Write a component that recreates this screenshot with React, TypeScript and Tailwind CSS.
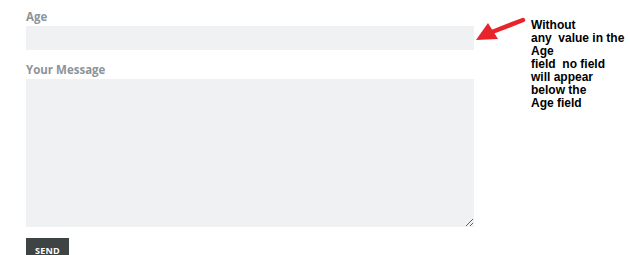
export default function App() {
  return (
    <div className="relative w-[630px] h-[255px] overflow-hidden bg-white">
      <form className="flex flex-col w-[448px] ml-[26px] pt-[9px]" style={{ fontFamily: '"Open Sans", sans-serif' }}>
        <label className="text-[11.5px] font-bold text-[#8c9499] leading-[16px]">Age</label>
        <input type="text" className="mt-[1px] h-[24px] bg-[#f0f1f2] outline-none" />
        <label className="mt-[12px] text-[11.5px] font-bold text-[#8c9499] leading-[16px]">Your Message</label>
        <textarea className="mt-[1px] h-[148px] bg-[#f0f1f2] outline-none resize-y" />
        <button
          type="button"
          className="mt-[11px] self-start w-[43px] h-[24px] bg-[#3e4444] text-white text-[9px] font-bold tracking-wide pt-[6px] flex justify-center"
        >
          SEND
        </button>
      </form>

      {/* annotation arrow */}
      <svg className="absolute left-[470px] top-[14px]" width="60" height="36" viewBox="0 0 60 36">
        <line x1="53" y1="6" x2="22" y2="18" stroke="#e8242b" strokeWidth="4.5" strokeLinecap="round" />
        <polygon points="6,26 18,9 28,25" fill="#e8242b" />
      </svg>

      <div
        className="absolute left-[531px] top-[19px] text-[12px] font-bold leading-[13px] text-black whitespace-pre"
        style={{ fontFamily: '"Liberation Sans", Arial, sans-serif' }}
      >
        {'Without\nany  value in the\nAge\nfield  no field\nwill appear\nbelow the\nAge field'}
      </div>
    </div>
  );
}
